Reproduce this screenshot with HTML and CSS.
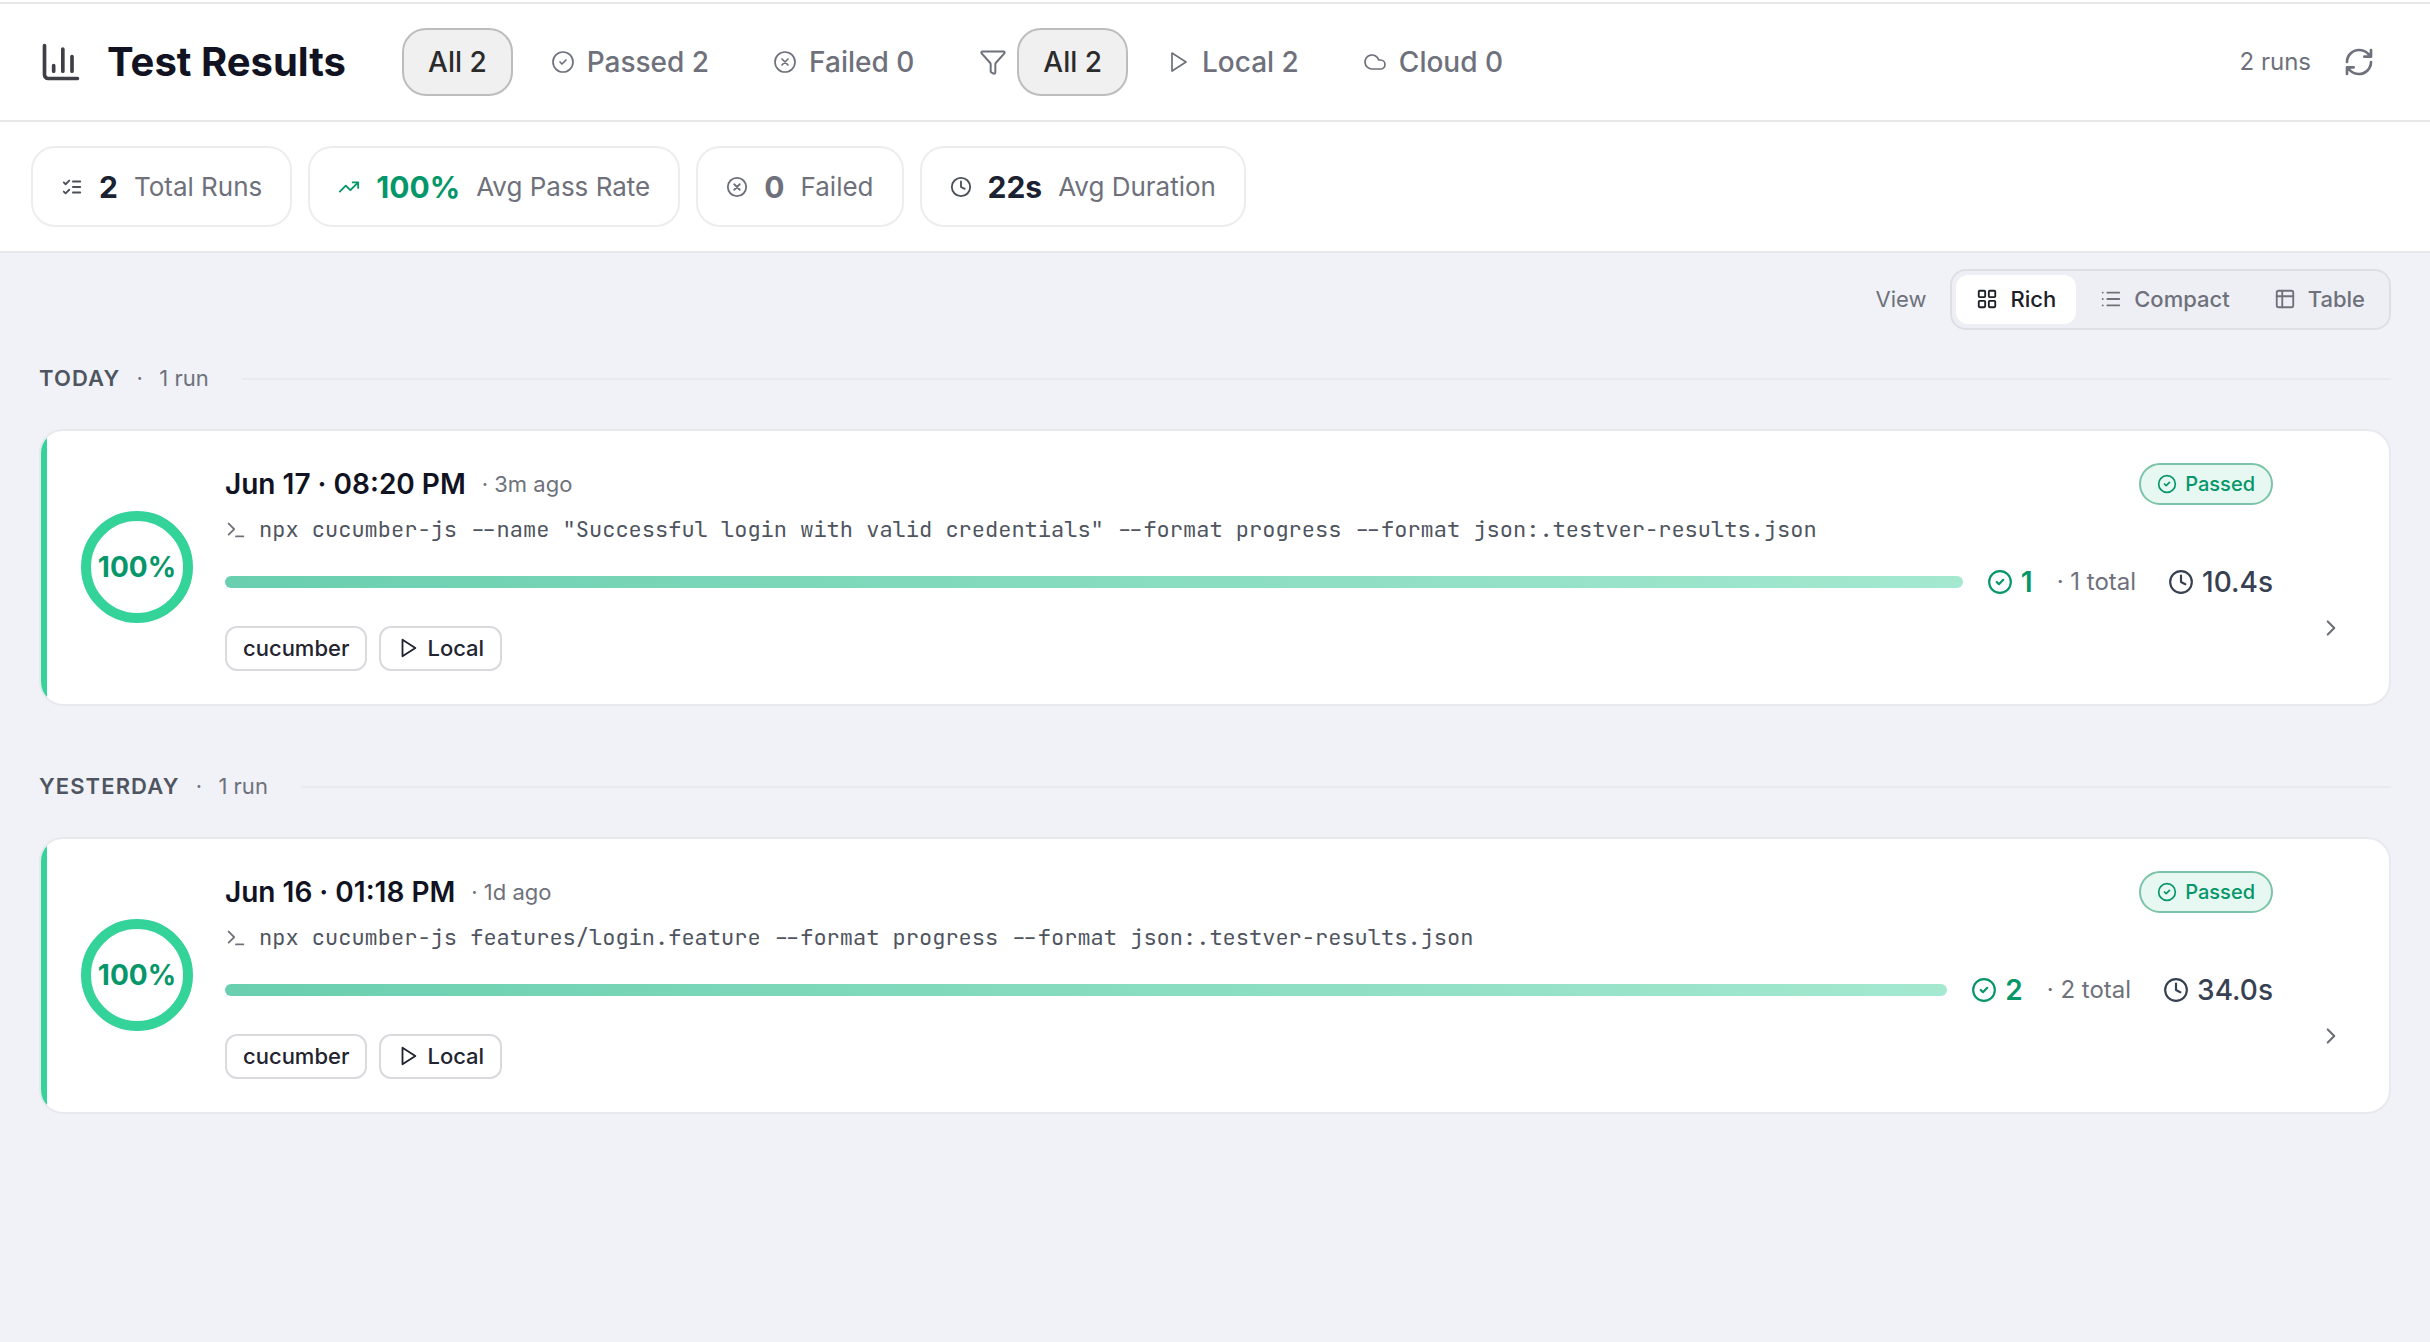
FILE: index.html
```html
<!DOCTYPE html>
<html lang="en">
<head>
    <meta charset="UTF-8">
    <meta name="viewport" content="width=device-width, initial-scale=1.0">
    <title>Test Results</title>
    <link rel="stylesheet" href="styles.css">
</head>
<body>
    <!-- icon set -->
    <svg class="sprite" xmlns="http://www.w3.org/2000/svg">
        <symbol id="chart" viewBox="0 0 24 24"><path d="M3 3v16a2 2 0 0 0 2 2h16M18 17V9M13 17V5M8 17v-3"/></symbol>
        <symbol id="check" viewBox="0 0 24 24"><circle cx="12" cy="12" r="10"/><path d="m9 12 2 2 4-4"/></symbol>
        <symbol id="cross" viewBox="0 0 24 24"><circle cx="12" cy="12" r="10"/><path d="m15 9-6 6M9 9l6 6"/></symbol>
        <symbol id="funnel" viewBox="0 0 24 24"><path d="M10 20a1 1 0 0 0 .553.895l2 1A1 1 0 0 0 14 21v-7a2 2 0 0 1 .517-1.341L21.74 4.67A1 1 0 0 0 21 3H3a1 1 0 0 0-.742 1.67l7.225 7.989A2 2 0 0 1 10 14z"/></symbol>
        <symbol id="play" viewBox="0 0 24 24"><path d="M6 3l14 9-14 9z"/></symbol>
        <symbol id="cloud" viewBox="0 0 24 24"><path d="M17.5 19H9a7 7 0 1 1 6.71-9h1.79a4.5 4.5 0 1 1 0 9Z"/></symbol>
        <symbol id="refresh" viewBox="0 0 24 24"><path d="M3 12a9 9 0 0 1 9-9 9.75 9.75 0 0 1 6.74 2.74L21 8M21 3v5h-5M21 12a9 9 0 0 1-9 9 9.75 9.75 0 0 1-6.74-2.74L3 16M8 16H3v5"/></symbol>
        <symbol id="tasks" viewBox="0 0 24 24"><path d="m3 17 2 2 4-4M3 7l2 2 4-4M13 6h8M13 12h8M13 18h8"/></symbol>
        <symbol id="trend" viewBox="0 0 24 24"><path d="M22 7l-8.5 8.5-5-5L2 17M16 7h6v6"/></symbol>
        <symbol id="clock" viewBox="0 0 24 24"><circle cx="12" cy="12" r="10"/><path d="M12 6v6l4 2"/></symbol>
        <symbol id="grid" viewBox="0 0 24 24"><rect x="3" y="3" width="7" height="7" rx="1"/><rect x="14" y="3" width="7" height="7" rx="1"/><rect x="14" y="14" width="7" height="7" rx="1"/><rect x="3" y="14" width="7" height="7" rx="1"/></symbol>
        <symbol id="list" viewBox="0 0 24 24"><path d="M3 5h.01M3 12h.01M3 19h.01M8 5h13M8 12h13M8 19h13"/></symbol>
        <symbol id="table" viewBox="0 0 24 24"><rect x="3" y="3" width="18" height="18" rx="2"/><path d="M9 3v18M3 9h18"/></symbol>
        <symbol id="terminal" viewBox="0 0 24 24"><path d="M4 17l6-6-6-6M12 19h8"/></symbol>
        <symbol id="chevron" viewBox="0 0 24 24"><path d="m9 18 6-6-6-6"/></symbol>
    </svg>

    <header class="topbar">
        <svg class="icon icon-logo"><use href="#chart"/></svg>
        <h1>Test Results</h1>
        <nav class="filters">
            <button class="filter active">All 2</button>
            <button class="filter"><svg class="icon"><use href="#check"/></svg>Passed 2</button>
            <button class="filter"><svg class="icon"><use href="#cross"/></svg>Failed 0</button>
        </nav>
        <svg class="icon icon-funnel"><use href="#funnel"/></svg>
        <nav class="filters">
            <button class="filter active">All 2</button>
            <button class="filter"><svg class="icon"><use href="#play"/></svg>Local 2</button>
            <button class="filter"><svg class="icon"><use href="#cloud"/></svg>Cloud 0</button>
        </nav>
        <span class="run-count">2 runs</span>
        <button class="refresh"><svg class="icon"><use href="#refresh"/></svg></button>
    </header>

    <section class="stats">
        <div class="stat">
            <svg class="icon"><use href="#tasks"/></svg>
            <strong>2</strong>
            <span>Total Runs</span>
        </div>
        <div class="stat stat-green">
            <svg class="icon"><use href="#trend"/></svg>
            <strong>100%</strong>
            <span>Avg Pass Rate</span>
        </div>
        <div class="stat stat-muted">
            <svg class="icon"><use href="#cross"/></svg>
            <strong>0</strong>
            <span>Failed</span>
        </div>
        <div class="stat">
            <svg class="icon"><use href="#clock"/></svg>
            <strong>22s</strong>
            <span>Avg Duration</span>
        </div>
    </section>

    <main class="content">
        <div class="toolbar">
            <span class="toolbar-label">View</span>
            <div class="view-switch">
                <button class="view active"><svg class="icon"><use href="#grid"/></svg>Rich</button>
                <button class="view"><svg class="icon"><use href="#list"/></svg>Compact</button>
                <button class="view"><svg class="icon"><use href="#table"/></svg>Table</button>
            </div>
        </div>

        <section class="group">
            <div class="group-header">
                <h2>Today</h2>
                <span class="dot">·</span>
                <span class="group-count">1 run</span>
                <div class="line"></div>
            </div>
            <article class="card">
                <div class="ring">100%</div>
                <div class="card-body">
                    <div class="title-row">
                        <h3>Jun 17 · 08:20 PM</h3>
                        <span class="ago">· 3m ago</span>
                        <span class="badge"><svg class="icon"><use href="#check"/></svg>Passed</span>
                    </div>
                    <div class="command">
                        <svg class="icon"><use href="#terminal"/></svg>
                        <code>npx cucumber-js --name "Successful login with valid credentials" --format progress --format json:.testver-results.json</code>
                    </div>
                    <div class="progress-row">
                        <div class="bar"></div>
                        <span class="passed"><svg class="icon"><use href="#check"/></svg>1</span>
                        <span class="total">· 1 total</span>
                        <span class="duration"><svg class="icon"><use href="#clock"/></svg>10.4s</span>
                    </div>
                    <div class="tags">
                        <span class="tag">cucumber</span>
                        <span class="tag"><svg class="icon"><use href="#play"/></svg>Local</span>
                    </div>
                </div>
                <svg class="icon icon-chevron"><use href="#chevron"/></svg>
            </article>
        </section>

        <section class="group">
            <div class="group-header">
                <h2>Yesterday</h2>
                <span class="dot">·</span>
                <span class="group-count">1 run</span>
                <div class="line"></div>
            </div>
            <article class="card">
                <div class="ring">100%</div>
                <div class="card-body">
                    <div class="title-row">
                        <h3>Jun 16 · 01:18 PM</h3>
                        <span class="ago">· 1d ago</span>
                        <span class="badge"><svg class="icon"><use href="#check"/></svg>Passed</span>
                    </div>
                    <div class="command">
                        <svg class="icon"><use href="#terminal"/></svg>
                        <code>npx cucumber-js features/login.feature --format progress --format json:.testver-results.json</code>
                    </div>
                    <div class="progress-row">
                        <div class="bar"></div>
                        <span class="passed"><svg class="icon"><use href="#check"/></svg>2</span>
                        <span class="total">· 2 total</span>
                        <span class="duration"><svg class="icon"><use href="#clock"/></svg>34.0s</span>
                    </div>
                    <div class="tags">
                        <span class="tag">cucumber</span>
                        <span class="tag"><svg class="icon"><use href="#play"/></svg>Local</span>
                    </div>
                </div>
                <svg class="icon icon-chevron"><use href="#chevron"/></svg>
            </article>
        </section>
    </main>
</body>
</html>
```
FILE: styles.css
```css
* {
    box-sizing: border-box;
}

body {
    margin: 0;
    padding-top: 2px;
    min-height: 100vh;
    display: flex;
    flex-direction: column;
    background: #fff;
    color: #1f2937;
    font-family: Inter, "Liberation Sans", sans-serif;
    font-size: 22px;
    white-space: nowrap;
}

h1, h2, h3 {
    margin: 0;
}

button {
    font-family: inherit;
    background: none;
    border: none;
    cursor: pointer;
}

.sprite {
    display: none;
}

.icon {
    width: 24px;
    height: 24px;
    flex-shrink: 0;
    fill: none;
    stroke: currentColor;
    stroke-width: 2;
    stroke-linecap: round;
    stroke-linejoin: round;
}

/* top bar */
.topbar {
    display: flex;
    align-items: center;
    height: 120px;
    padding: 0 43px 0 39px;
    border-top: 2px solid #e8e8ea;
    border-bottom: 2px solid #e8e8ea;
}

.icon-logo {
    width: 44px;
    height: 44px;
    color: #3f3f46;
}

h1 {
    margin: 0 56px 0 24px;
    padding-bottom: 2px;
    font-size: 40px;
    font-weight: 700;
    color: #111322;
}

.filters {
    display: flex;
    gap: 12px;
}

.filter {
    display: flex;
    align-items: center;
    gap: 12px;
    height: 68px;
    padding: 0 24px;
    border: 2px solid transparent;
    border-radius: 24px;
    font-size: 28px;
    font-weight: 500;
    color: #6e717b;
}

.filter .icon {
    stroke-width: 1.7;
}

.filter.active {
    background: #f0f0f0;
    border-color: #bdbdbd;
    color: #2b2b2b;
}

.icon-funnel {
    width: 28px;
    height: 28px;
    margin: 0 10px 0 39px;
    color: #6e717b;
    stroke-width: 1.7;
}

.run-count {
    margin-left: auto;
    padding-bottom: 1px;
    font-size: 24px;
    color: #6e717b;
}

.refresh {
    display: flex;
    padding: 12px;
    margin-left: 20px;
    color: #6e717b;
}

.refresh .icon {
    width: 32px;
    height: 32px;
}

/* summary cards */
.stats {
    display: flex;
    gap: 16px;
    padding: 24px 31px;
    border-bottom: 2px solid #e6e7eb;
}

.stat {
    display: flex;
    align-items: center;
    height: 81px;
    padding: 0 28px;
    border: 2px solid #ededef;
    border-radius: 24px;
    color: #4b5058;
}

.stat .icon {
    width: 22px;
    height: 22px;
}

.stat strong {
    margin: 0 16px;
    font-size: 30px;
    font-weight: 700;
    color: #1b2231;
}

.stat span {
    font-size: 26px;
    color: #6e717b;
}

.stat-green,
.stat-green strong {
    color: #059669;
}

.stat-muted,
.stat-muted strong {
    color: #6e717b;
}

/* results list */
.content {
    flex: 1;
    padding: 16px 39px;
    background: #f0f2f7;
}

.toolbar {
    display: flex;
    align-items: center;
    justify-content: flex-end;
    gap: 24px;
    margin-bottom: 32px;
}

.toolbar-label {
    padding-bottom: 1px;
    color: #6e717b;
}

.view-switch {
    display: flex;
    align-items: center;
    gap: 4px;
    height: 61px;
    padding: 4px;
    border: 2px solid #dddfe4;
    border-radius: 16px;
    background: #eeeff4;
}

.view {
    display: flex;
    align-items: center;
    gap: 12px;
    height: 49px;
    padding: 0 20px 1px;
    border-radius: 12px;
    font-size: 22px;
    font-weight: 500;
    color: #6e717b;
}

.view .icon {
    width: 22px;
    height: 22px;
}

.view.active {
    background: #fff;
    color: #1b2028;
}

.group {
    margin-bottom: 64px;
}

.group-header {
    display: flex;
    align-items: center;
    height: 32px;
    margin-bottom: 35px;
    color: #6e717b;
}

.group-header h2 {
    font-size: 22px;
    font-weight: 600;
    letter-spacing: 1.1px;
    text-transform: uppercase;
    color: #4f5560;
}

.group-header .dot {
    width: 39px;
    text-align: center;
}

.line {
    flex: 1;
    height: 2px;
    margin: 2px 0 0 33px;
    background: #e8eaee;
}

.card {
    position: relative;
    display: flex;
    align-items: center;
    height: 277px;
    padding: 31px 45px 33px 40px;
    border: 2px solid #e8e9ed;
    border-radius: 24px;
    background: #fff;
    overflow: hidden;
}

.card::before {
    content: "";
    position: absolute;
    left: 0;
    top: 0;
    bottom: 0;
    width: 6px;
    background: #34d399;
}

.ring {
    display: flex;
    align-items: center;
    justify-content: center;
    width: 112px;
    height: 112px;
    margin-right: 32px;
    border: 10px solid #34d399;
    border-radius: 50%;
    font-size: 28px;
    font-weight: 700;
    color: #059669;
}

.card-body {
    flex: 1;
}

.title-row {
    display: flex;
    align-items: center;
    height: 42px;
}

.title-row h3 {
    font-size: 28px;
    font-weight: 600;
    color: #111322;
}

.ago {
    margin-left: 16px;
    color: #6e717b;
}

.badge {
    display: flex;
    align-items: center;
    gap: 8px;
    height: 42px;
    margin-left: auto;
    padding: 0 16px;
    border: 2px solid #7cc3a8;
    border-radius: 21px;
    background: #e6f8f1;
    font-size: 20px;
    font-weight: 500;
    color: #059669;
}

.badge .icon {
    width: 20px;
    height: 20px;
}

.command {
    display: flex;
    align-items: center;
    gap: 12px;
    height: 32px;
    margin-top: 9px;
    color: #4f5560;
}

.command .icon {
    width: 22px;
    height: 22px;
    color: #6e717b;
}

.command code {
    font-family: "JetBrains Mono", "DejaVu Sans Mono", monospace;
    font-size: 22px;
}

.progress-row {
    display: flex;
    align-items: center;
    height: 34px;
    margin-top: 19px;
    font-size: 28px;
    font-weight: 500;
}

.bar {
    flex: 1;
    height: 12px;
    border-radius: 6px;
    background: linear-gradient(90deg, #69cfae, #a4e8d0);
}

.passed,
.duration {
    display: flex;
    align-items: center;
    gap: 8px;
}

.progress-row .icon {
    width: 26px;
    height: 26px;
}

.passed {
    margin-left: 24px;
    font-weight: 600;
    color: #059669;
}

.total {
    margin: 0 32px 0 24px;
    font-size: 24px;
    font-weight: 400;
    color: #6e717b;
}

.duration {
    color: #374151;
}

.tags {
    display: flex;
    gap: 12px;
    margin-top: 27px;
}

.tag {
    display: flex;
    align-items: center;
    gap: 8px;
    height: 45px;
    padding: 0 16px;
    border: 2px solid #d9dadd;
    border-radius: 12px;
    font-weight: 500;
    color: #1f2430;
}

.tag .icon {
    width: 22px;
    height: 22px;
}

/* chevron sits lower than the card centre */
.icon-chevron {
    width: 26px;
    height: 26px;
    margin: 123px 0 0 45px;
    color: #6e717b;
}
```
